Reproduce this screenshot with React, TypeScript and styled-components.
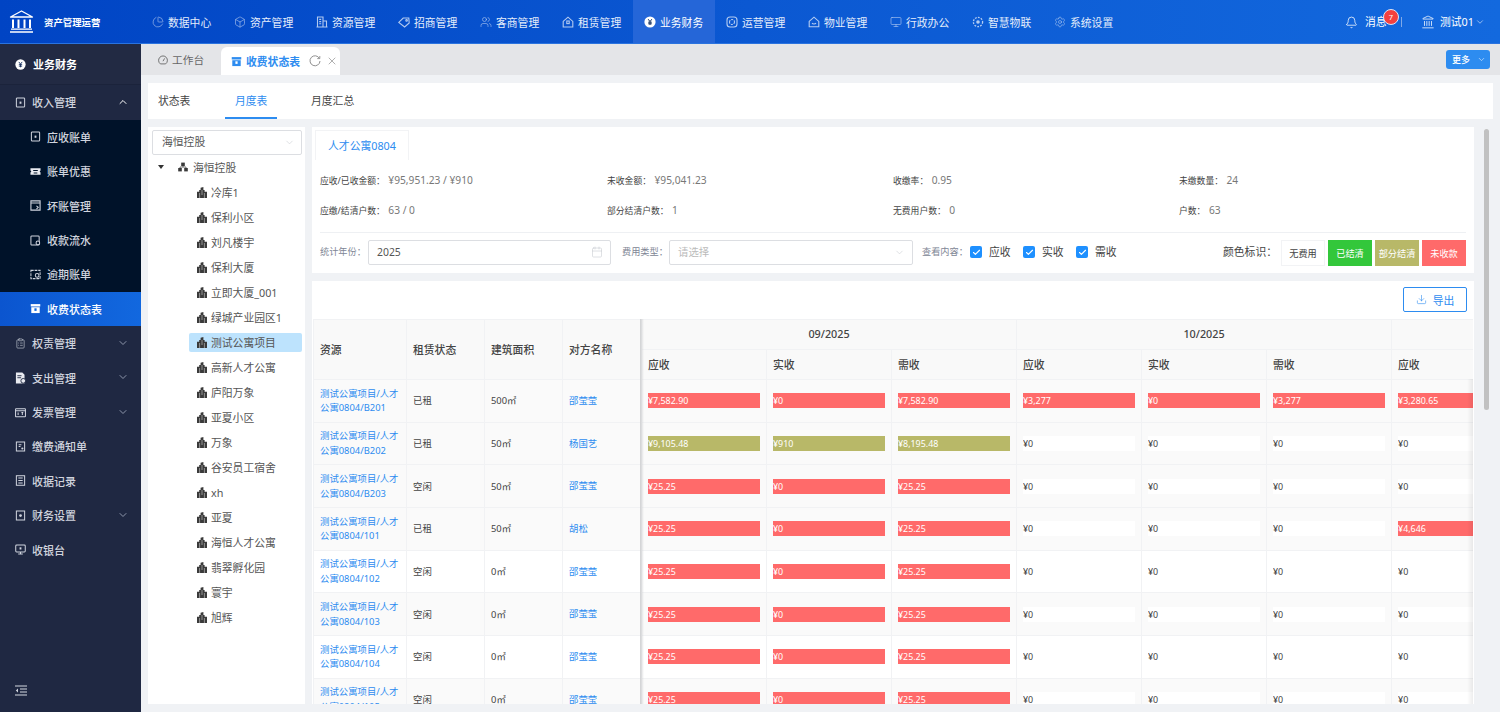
import React from "react";
import styled, { createGlobalStyle } from "styled-components";
import { Bell, Box, Calendar, ChevronDown, ChevronUp, Check, ClipboardList, Download, Landmark, Monitor, PieChart, Settings, Users, X } from "lucide-react";

const Global = createGlobalStyle`
  html, body { margin: 0; padding: 0; width: 100%; height: 100%; overflow: hidden; background: #f0f2f5; }
  body { font-family: "Noto Sans", "Noto Sans CJK SC", sans-serif; font-size: 11px; color: #333; }
  * { box-sizing: border-box; }
`;

const Page = styled.div`position: relative; width: 1500px; height: 712px; overflow: hidden; background: #f0f2f5;`;

const Header = styled.header`
  position: absolute; left: 0; top: 0; width: 1500px; height: 44px; display: flex; align-items: center;
  background: linear-gradient(90deg, #0044c4 0%, #0b58d2 50%, #1369de 100%);
  border-bottom: 1px solid #2a73df; color: #fff;
`;
const Brand = styled.div`width: 140.5px; display: flex; align-items: center; padding-left: 9px; height: 100%; flex: none;`;
const BrandName = styled.span`margin-left: 10px; font-size: 9.4px; font-weight: 700; white-space: nowrap;`;
const NavItem = styled.div<{ $active?: boolean }>`
  width: 82px; height: 100%; flex: none; display: flex; align-items: center; padding-left: 11.5px; gap: 4px;
  font-size: 10.8px; white-space: nowrap; color: ${(p) => (p.$active ? "#fff" : "#e4edfb")};
  background: ${(p) => (p.$active ? "#2566d8" : "transparent")};
  svg { flex: none; opacity: ${(p) => (p.$active ? 1 : 0.78)}; }
`;
const HeaderRight = styled.div`position: absolute; left: 0; top: 0; height: 44px; width: 100%; pointer-events: none;`;
const HeaderText = styled.span<{ $x: number }>`position: absolute; left: ${(p) => p.$x}px; top: 14px; line-height: 16px; font-size: 10.8px; white-space: nowrap;`;
const HeaderIcon = styled.span<{ $x: number }>`position: absolute; left: ${(p) => p.$x}px; top: 15px; height: 14px; display: flex; align-items: center;`;
const Badge = styled.span`
  position: absolute; left: 1383px; top: 9px; width: 16px; height: 16px; border-radius: 50%; background: #f4413f;
  border: 1px solid #dbe6f8; color: #fff; font-size: 7.5px; line-height: 14px; text-align: center;
`;
const HeaderDivider = styled.span`position: absolute; left: 1401px; top: 17px; width: 1px; height: 10px; background: #7fa9e8;`;

const Sidebar = styled.aside`position: absolute; left: 0; top: 44px; width: 141px; height: 668px; background: #1f2842;`;
const SideTitle = styled.div`
  height: 41.3px; display: flex; align-items: center; padding-left: 15px; gap: 7px; background: #222a43; color: #fff;
  font-size: 11px; font-weight: 700; border-bottom: 1px solid #1b233b;
`;
const SideRow = styled.div<{ $sub?: boolean; $active?: boolean }>`
  position: relative; height: 34.4px; display: flex; align-items: center; font-size: 11px; white-space: nowrap;
  padding-left: ${(p) => (p.$sub ? "30px" : "15px")}; gap: 6px;
  color: ${(p) => (p.$active ? "#fff" : "#d0d4de")}; font-weight: 500;
  background: ${(p) => (p.$active ? "linear-gradient(90deg,#0b55cf,#1268df)" : p.$sub ? "#001229" : "transparent")};
  svg.lead { flex: none; }
`;
const Arrow = styled.span`position: absolute; left: 117px; top: 11px; display: flex; color: #8d96aa;`;
const Collapse = styled.div`position: absolute; left: 15px; top: 641px; color: #d3d7e0; display: flex;`;

const TabBar = styled.div`position: absolute; left: 141px; top: 44px; width: 1359px; height: 31px; background: #e4e5e8;`;
const HomeTab = styled.div`position: absolute; left: 17px; top: 0; height: 31px; display: flex; align-items: center; gap: 4px; color: #666; font-size: 10.7px;`;
const ActiveTab = styled.div`
  position: absolute; left: 80px; top: 3px; width: 119px; height: 28px; background: #fff; border-radius: 6px 6px 0 0;
  display: flex; align-items: center; padding-left: 10px; color: #2d8cf0; font-size: 10.8px; font-weight: 600;
  span { margin-left: 4px; }
`;
const TabTool = styled.span<{ $x: number }>`position: absolute; left: ${(p) => p.$x}px; top: 8px; display: flex; color: #8f8f8f;`;
const MoreButton = styled.div`
  position: absolute; left: 1305px; top: 6px; width: 44px; height: 19px; border-radius: 3px; background: #2d8cf0; color: #fff;
  font-size: 9px; font-weight: 500; display: flex; align-items: center; padding-left: 6px; gap: 7px;
`;

const SubTabs = styled.div`position: absolute; left: 148px; top: 83px; width: 1345px; height: 36px; background: #fff;`;
const SubTab = styled.div<{ $x: number; $active?: boolean }>`
  position: absolute; left: ${(p) => p.$x}px; top: 0; height: 36px; line-height: 35px; font-size: 10.8px;
  color: ${(p) => (p.$active ? "#2d8cf0" : "#444")}; white-space: nowrap;
`;
const SubUnderline = styled.div`position: absolute; left: 77px; top: 34px; width: 52px; height: 2px; background: #2d8cf0;`;

const TreePanel = styled.div`position: absolute; left: 148px; top: 127px; width: 157px; height: 577px; background: #fff;`;
const TreeSelect = styled.div`
  position: absolute; left: 4px; top: 3px; width: 150px; height: 25px; border: 1px solid #dcdee2; border-radius: 2px; padding-left: 9px;
  line-height: 22px; font-size: 10.8px; color: #555;
`;
const SelectArrow = styled.span<{ $x: number; $y?: number }>`position: absolute; left: ${(p) => p.$x}px; top: ${(p) => p.$y ?? 6}px; display: flex; color: #c5c8ce;`;
const TreeRoot = styled.div`position: absolute; left: 0; top: 27.5px; width: 157px; height: 25px; display: flex; align-items: center; font-size: 10.8px; color: #555; gap: 5px;`;
const Caret = styled.span`margin-left: 10px; margin-right: 9px; width: 0; height: 0; border-left: 3px solid transparent; border-right: 3px solid transparent; border-top: 4px solid #333;`;
const TreeList = styled.div`position: absolute; left: 41px; top: 52.5px; width: 113px;`;
const TreeNode = styled.div<{ $active?: boolean }>`
  height: 25px; display: flex; align-items: center; padding-left: 8px; gap: 4px; font-size: 10.8px; color: #555; white-space: nowrap;
  position: relative; z-index: 0;
  &::before { content: ""; position: absolute; z-index: -1; left: 0; right: 0; top: 3px; bottom: 3px; border-radius: 2px; background: ${(p) => (p.$active ? "#bde3fd" : "transparent")}; }
`;

const InfoPanel = styled.div`position: absolute; left: 312px; top: 127px; width: 1162px; height: 146px; background: #fff;`;
const PanelTab = styled.div`
  position: absolute; left: 3px; top: 3px; width: 94px; height: 30px; border: 1px solid #f2f3f5; border-bottom: none;
  color: #2d8cf0; font-size: 10.8px; line-height: 30px; text-align: center;
`;
const Stat = styled.div<{ $x: number; $y: number }>`
  position: absolute; left: ${(p) => p.$x}px; top: ${(p) => p.$y}px; height: 16px; line-height: 16px; white-space: nowrap; font-size: 8.8px; color: #444;
  b { font-weight: 400; font-size: 10.2px; color: #777; margin-left: 3.5px; }
`;
const Divider = styled.div`position: absolute; left: 8px; right: 8px; top: 105px; height: 1px; background: #eef0f3;`;
const FilterLabel = styled.span<{ $x: number }>`position: absolute; left: ${(p) => p.$x}px; top: 117px; line-height: 16px; font-size: 9.2px; color: #808695; white-space: nowrap;`;
const Field = styled.div<{ $x: number; $w: number; $muted?: boolean }>`
  position: absolute; left: ${(p) => p.$x}px; top: 113px; width: ${(p) => p.$w}px; height: 25px; border: 1px solid #dcdee2; border-radius: 2px;
  padding-left: 8px; line-height: 23px; font-size: 10.4px; color: ${(p) => (p.$muted ? "#bbb" : "#555")};
`;
const CheckBox = styled.span<{ $x: number }>`
  position: absolute; left: ${(p) => p.$x}px; top: 119px; width: 12px; height: 12px; background: #1e90ff; border-radius: 2px; display: flex; align-items: center; justify-content: center; color: #fff;
`;
const CheckLabel = styled.span<{ $x: number }>`position: absolute; left: ${(p) => p.$x}px; top: 117px; line-height: 16px; font-size: 10.8px; color: #444; white-space: nowrap;`;
const LegendTitle = styled.span`position: absolute; left: 911px; top: 117px; line-height: 16px; font-size: 10.8px; color: #444; white-space: nowrap;`;
const Legend = styled.span<{ $x: number; $bg: string; $c: string }>`
  position: absolute; left: ${(p) => p.$x}px; top: 113px; width: 44px; height: 26px; background: ${(p) => p.$bg}; color: ${(p) => p.$c};
  font-size: 9.2px; line-height: 26px; text-align: center; border: 1px solid ${(p) => (p.$bg === "#fff" ? "#f2f3f5" : p.$bg)}; white-space: nowrap;
`;

const TablePanel = styled.div`position: absolute; left: 312px; top: 281px; width: 1162px; height: 423px; background: #fff; overflow: hidden;`;
const ExportButton = styled.div`
  position: absolute; left: 1091px; top: 6px; width: 64px; height: 25px; border: 1px solid #2d8cf0; border-radius: 2px; color: #2d8cf0; font-size: 10.8px;
  display: flex; align-items: center; justify-content: center; gap: 6px;
`;
const TableBox = styled.div`position: absolute; left: 1px; top: 38px; width: 1160px; height: 385px; overflow: hidden;`;
const Table = styled.table`border-collapse: collapse; table-layout: fixed; width: 1203px;`;
const Th = styled.th<{ $left?: boolean }>`
  background: #f9f9f9; border: 1px solid #f1f2f4; font-weight: 500; font-size: 10.8px; color: #444; padding: 0 6px 2px; text-align: ${(p) => (p.$left ? "left" : "center")};
  height: 30px; white-space: nowrap;
`;
const Td = styled.td<{ $plain?: boolean }>`
  background: ${(p) => (p.$plain ? "#fff" : "#fafafa")}; border: 1px solid #f1f2f4; font-size: 9.4px; color: #444; padding: 0 6px; height: 42.67px; line-height: 15px; white-space: nowrap;
`;
const Link = styled.span`color: #2d8cf0; white-space: normal; display: block; line-height: 14.6px; padding-top: 1px;`;
const Amount = styled.div<{ $kind: string }>`
  height: 15px; line-height: 15px; width: 112px; overflow: hidden; font-size: 8.9px;
  background: ${(p) => (p.$kind === "red" ? "#ff6a6a" : p.$kind === "olive" ? "#b8b868" : "#fff")};
  color: ${(p) => (p.$kind === "zero" ? "#444" : "#fff")};
`;
const FixedShadow = styled.div`position: absolute; left: 327px; top: 0; width: 4px; height: 385px; background: linear-gradient(90deg, #cfd0d2, rgba(230,230,230,0));`;
const RightShadow = styled.div`position: absolute; right: 0; top: 60px; width: 6px; height: 325px; background: linear-gradient(90deg, rgba(0,0,0,0), rgba(0,0,0,.07));`;

const Scrollbar = styled.div`position: absolute; left: 1484px; top: 129px; width: 5px; height: 281px; border-radius: 3px; background: #c1c1c1;`;

const Svg = ({ s = 11, vb = 12, fill = "none", children }: { s?: number; vb?: number; fill?: string; children: React.ReactNode }) => (
  <svg className="lead" width={s} height={s} viewBox={`0 0 ${vb} ${vb}`} fill={fill} stroke="currentColor" strokeWidth="1.1">{children}</svg>
);

function YenDot({ size }: { size: number }) {
  return (
    <svg className="lead" width={size} height={size} viewBox="0 0 12 12">
      <circle cx="6" cy="6" r="5.6" fill="#fff" />
      <path d="M4.2 3.2 6 5.6l1.8-2.4M4.2 6.2h3.6M4.2 7.8h3.6M6 5.6v3.4" stroke="#17305f" strokeWidth="1" fill="none" />
    </svg>
  );
}
const FrameDot = () => <Svg><rect x="1.5" y="1" width="9" height="10" rx="1" /><rect x="5" y="5" width="2" height="2.4" fill="currentColor" stroke="none" /></Svg>;
const TicketFill = () => (
  <svg className="lead" width="11" height="11" viewBox="0 0 12 12"><path d="M.5 2.5h11V5l-1 1 1 1v2.5H.5V7l1-1-1-1z" fill="#e8eaf0" /><path d="M3.5 5h5M4 7.6h4" stroke="#001229" strokeWidth="1.1" /></svg>
);
const FrameCut = () => <Svg><path d="M1 1h10v10H1z" strokeWidth="1.2" /><path d="M1 3.4h10M7 6.5l2 1.5-2 2" /></Svg>;
const FrameFlow = () => <Svg><rect x="1" y="1" width="9" height="10" rx="1" /><circle cx="8.6" cy="8.6" r="2" fill="#001229" /></Svg>;
const FrameLate = () => <Svg><path d="M1 1.5h10v9H1z" strokeDasharray="3 1" /><circle cx="7.8" cy="7" r="2" fill="#001229" /></Svg>;
const ArchiveFill = () => (
  <svg className="lead" width="11" height="11" viewBox="0 0 12 12" fill="currentColor"><path d="M.8 1.2h10.4v2.6H.8z" /><path d="M1.4 4.6h9.2v6.4H1.4z" /><rect x="4.8" y="5.8" width="2.4" height="2.8" fill="#1268df" /></svg>
);
const BillFill = () => (
  <svg className="lead" width="11" height="12" viewBox="0 0 12 13"><path d="M1 .6h7l2.4 2.4v9.4H1z" fill="#e8eaf0" /><circle cx="9" cy="9.6" r="2.6" fill="#e8eaf0" stroke="#1f2842" strokeWidth="1" /><path d="M2.6 4h4.5M2.6 6.2h4" stroke="#1f2842" strokeWidth="1" /></svg>
);
const InvoiceIcon = () => <Svg><rect x=".6" y="2" width="10.8" height="8.6" rx=".6" /><path d="M.6 4h10.8M3.4 6v2.6M7 6h2M8 6v2.6" /></Svg>;
const NoticeIcon = () => <Svg><path d="M1.5 1h9v10h-9z" /><path d="M4 4h3M4 6h2" /><circle cx="8" cy="8.2" r="1.2" fill="currentColor" stroke="none" /></Svg>;
const ReceiptIcon = () => <Svg><rect x="1.5" y=".8" width="9" height="10.4" /><path d="M3.6 3.4h4.8M3.6 6h4.8M3.6 8.6h4.8" /></Svg>;
const GearFrame = () => <Svg><path d="M1.5 1h9v10h-9z" /><circle cx="6" cy="6" r="1.5" fill="currentColor" stroke="none" /></Svg>;
const DeskIcon = () => <Svg><rect x=".8" y="1.2" width="10.4" height="7.4" rx="1" /><path d="M3.5 10.9h5M6 8.6v2.3" /><rect x="5" y="3.6" width="2" height="2.4" fill="currentColor" stroke="none" /></Svg>;

const NavBuilding = () => <Svg s={12}><path d="M1.5 11V1h5.5v10M7 5h3.5v6M.5 11h11M3.2 3.4h2M3.2 5.6h2M3.2 7.8h2" /></Svg>;
const NavTag = () => <Svg s={12}><path d="M.8 6.4 5.2 2h5.6l.4 5L6.6 11z" /><circle cx="8.6" cy="4.4" r=".8" /></Svg>;
const NavOps = () => <Svg s={12}><rect x="1" y="1" width="10" height="10" rx="3" /><path d="M3.5 6a2.5 2.5 0 0 1 5 0M8.5 6a2.5 2.5 0 0 1-5 0" strokeDasharray="2 1" /></Svg>;
const NavProperty = () => <Svg s={12}><path d="M1.2 5.4 6 1.2l4.8 4.2v5.4H1.2z" /><path d="M4 7.2c.8 1 3.2 1 4 0" /></Svg>;
const NavIot = () => <Svg s={12}><circle cx="6" cy="6" r="1.8" fill="currentColor" stroke="none" /><circle cx="6" cy="6" r="4.6" strokeDasharray="1.8 1.2" strokeWidth="1.3" /></Svg>;
const NavLease = () => <Svg s={12}><path d="M1.2 5.4 6 1.2l4.8 4.2v5.6H1.2z" /><rect x="4.8" y="5" width="2.4" height="2.6" /></Svg>;

function LogoMark() {
  return (
    <svg width="25" height="23" viewBox="0 0 25 23" fill="none" stroke="#fff" style={{ flex: "none" }}>
      <path d="M12.5 1 23.5 7H1.5z" strokeWidth="1.3" strokeLinejoin="round" />
      <path d="M4 9.5v8.5M9.5 9.5v8.5M15.5 9.5v8.5M21 9.5v8.5" strokeWidth="2" />
      <path d="M2 19.2h21M1 22h23" strokeWidth="1.3" />
    </svg>
  );
}

function Tower() {
  return (
    <svg width="10" height="11" viewBox="0 0 10 11" fill="#3a3a3a" style={{ flex: "none" }}>
      <path d="M0 11V4.8h2.2V3H3.6V.8L6.4 0v3h1.2v1.8H10V11z" />
      <path d="M2.6 11V6M7.4 11V6M5 8V3" stroke="#fff" strokeWidth=".45" />
    </svg>
  );
}

function OrgIcon() {
  return (
    <svg width="10" height="10" viewBox="0 0 10 10" fill="#3a3a3a" style={{ flex: "none" }}>
      <rect x="3.2" y=".6" width="3.6" height="3.4" /><rect x=".2" y="6" width="3.6" height="3.4" /><rect x="6.2" y="6" width="3.6" height="3.4" />
      <path d="M5 4v1.2M2 6V5h6v1" stroke="#3a3a3a" strokeWidth=".7" fill="none" />
    </svg>
  );
}

function ArchiveFillTab() {
  return (
    <svg width="11" height="11" viewBox="0 0 12 12" fill="#2d8cf0" style={{ flex: "none" }}>
      <path d="M.8 1.2h10.4v2.6H.8z" /><path d="M1.4 4.6h9.2v6.4H1.4z" /><rect x="4.8" y="5.8" width="2.4" height="2.8" fill="#fff" />
    </svg>
  );
}

const nav: [string, React.ReactNode, boolean?][] = [
  ["数据中心", <PieChart size={12} strokeWidth={1.2} />],
  ["资产管理", <Box size={12} strokeWidth={1.2} />],
  ["资源管理", <NavBuilding />],
  ["招商管理", <NavTag />],
  ["客商管理", <Users size={12} strokeWidth={1.2} />],
  ["租赁管理", <NavLease />],
  ["业务财务", <YenDot size={12} />, true],
  ["运营管理", <NavOps />],
  ["物业管理", <NavProperty />],
  ["行政办公", <Monitor size={12} strokeWidth={1.2} />],
  ["智慧物联", <NavIot />],
  ["系统设置", <Settings size={12} strokeWidth={1.1} />],
];

const subItems: [string, React.ReactNode, boolean?][] = [
  ["应收账单", <FrameDot />],
  ["账单优惠", <TicketFill />],
  ["坏账管理", <FrameCut />],
  ["收款流水", <FrameFlow />],
  ["逾期账单", <FrameLate />],
  ["收费状态表", <ArchiveFill />, true],
];

const topItems: [string, React.ReactNode, boolean][] = [
  ["权责管理", <ClipboardList className="lead" size={11} strokeWidth={1.3} />, true],
  ["支出管理", <BillFill />, true],
  ["发票管理", <InvoiceIcon />, true],
  ["缴费通知单", <NoticeIcon />, false],
  ["收据记录", <ReceiptIcon />, false],
  ["财务设置", <GearFrame />, true],
  ["收银台", <DeskIcon />, false],
];

const treeItems = ["冷库1", "保利小区", "刘凡楼宇", "保利大厦", "立即大厦_001", "绿城产业园区1", "测试公寓项目", "高新人才公寓", "庐阳万象", "亚夏小区", "万象", "谷安员工宿舍", "xh", "亚夏", "海恒人才公寓", "翡翠孵化园", "寰宇", "旭辉"];

type Row = { res: string; st: string; area: string; name: string; kind: string; plain?: boolean; a: string[] };
const base = "测试公寓项目/人才公寓0804/";
const z = (a: string, b: string, c: string, last = "¥0") => [a, b, c, "¥0", "¥0", "¥0", last];
const rows: Row[] = [
  { res: "B201", st: "已租", area: "500", name: "邵莹莹", kind: "red", a: ["¥7,582.90", "¥0", "¥7,582.90", "¥3,277", "¥0", "¥3,277", "¥3,280.65"] },
  { res: "B202", st: "已租", area: "50", name: "杨国艺", kind: "olive", a: z("¥9,105.48", "¥910", "¥8,195.48") },
  { res: "B203", st: "空闲", area: "50", name: "邵莹莹", kind: "red", a: z("¥25.25", "¥0", "¥25.25") },
  { res: "101", st: "已租", area: "50", name: "胡松", kind: "red", a: z("¥25.25", "¥0", "¥25.25", "¥4,646") },
  { res: "102", st: "空闲", area: "0", name: "邵莹莹", kind: "red", plain: true, a: z("¥25.25", "¥0", "¥25.25") },
  { res: "103", st: "空闲", area: "0", name: "邵莹莹", kind: "red", a: z("¥25.25", "¥0", "¥25.25") },
  { res: "104", st: "空闲", area: "0", name: "邵莹莹", kind: "red", plain: true, a: z("¥25.25", "¥0", "¥25.25") },
  { res: "105", st: "空闲", area: "0", name: "邵莹莹", kind: "red", a: z("¥25.25", "¥0", "¥25.25") },
];

const kindOf = (r: Row, i: number, v: string) => {
  if (i < 3) return r.kind;
  return r.res === "B201" || v !== "¥0" ? "red" : "zero";
};

const colWidths = [93, 78, 78, 79, 125, 125, 125, 125, 125, 125, 125];
const sub = ["应收", "实收", "需收", "应收", "实收", "需收", "应收"];

export default function App() {
  return (
    <Page>
      <Global />
      <Header>
        <Brand>
          <LogoMark />
          <BrandName>资产管理运营</BrandName>
        </Brand>
        {nav.map(([t, i, a]) => (
          <NavItem key={t} $active={a}>{i}<span>{t}</span></NavItem>
        ))}
        <HeaderRight>
          <HeaderIcon $x={1345}><Bell size={13} strokeWidth={1.4} /></HeaderIcon>
          <HeaderText $x={1365}>消息</HeaderText>
          <Badge>7</Badge>
          <HeaderDivider />
          <HeaderIcon $x={1421}><Landmark size={14} strokeWidth={1.3} /></HeaderIcon>
          <HeaderText $x={1440}>测试01</HeaderText>
          <HeaderIcon $x={1475}><ChevronDown size={10} strokeWidth={1.3} /></HeaderIcon>
        </HeaderRight>
      </Header>

      <Sidebar>
        <SideTitle><YenDot size={11} />业务财务</SideTitle>
        <SideRow><FrameDot />收入管理<Arrow><ChevronUp size={12} strokeWidth={2} color="#fff" /></Arrow></SideRow>
        {subItems.map(([t, i, a]) => <SideRow key={t} $sub $active={a}>{i}{t}</SideRow>)}
        {topItems.map(([t, i, ar]) => (
          <SideRow key={t}>{i}{t}{ar && <Arrow><ChevronDown size={12} strokeWidth={2} /></Arrow>}</SideRow>
        ))}
        <Collapse>
          <svg width="12" height="11" viewBox="0 0 12 11" fill="none" stroke="currentColor" strokeWidth="1.2">
            <path d="M0 1h12M5 4h7M5 7h7M0 10h12" /><path d="M3 3.5 .8 5.5 3 7.5z" fill="currentColor" stroke="none" />
          </svg>
        </Collapse>
      </Sidebar>

      <TabBar>
        <HomeTab>
          <svg width="10" height="10" viewBox="0 0 10 10" fill="none" stroke="currentColor" strokeWidth=".9">
            <path d="M2.4 8.9a4.4 4.4 0 1 1 5.2 0z" /><path d="M5 6.2 6.6 3.4" />
          </svg>
          工作台
        </HomeTab>
        <ActiveTab>
          <ArchiveFillTab />
          <span>收费状态表</span>
          <TabTool $x={84}>
            <svg width="12" height="12" viewBox="0 0 12 12" fill="none" stroke="currentColor" strokeWidth="1"><path d="M10.4 3.4A5 5 0 1 0 11 6" /><path d="M10.8 1v2.6H8.2" strokeWidth=".9" /></svg>
          </TabTool>
          <TabTool $x={101}><X size={12} strokeWidth={1.4} /></TabTool>
        </ActiveTab>
        <MoreButton>更多<ChevronDown size={9} strokeWidth={1.4} /></MoreButton>
      </TabBar>

      <SubTabs>
        <SubTab $x={10}>状态表</SubTab>
        <SubTab $x={87} $active>月度表</SubTab>
        <SubUnderline />
        <SubTab $x={163}>月度汇总</SubTab>
      </SubTabs>

      <TreePanel>
        <TreeSelect>海恒控股<SelectArrow $x={131}><ChevronDown size={11} strokeWidth={1.2} /></SelectArrow></TreeSelect>
        <TreeRoot><Caret /><OrgIcon />海恒控股</TreeRoot>
        <TreeList>
          {treeItems.map((t) => (
            <TreeNode key={t} $active={t === "测试公寓项目"}><Tower />{t}</TreeNode>
          ))}
        </TreeList>
      </TreePanel>

      <InfoPanel>
        <PanelTab>人才公寓0804</PanelTab>
        <Stat $x={8} $y={45}>应收/已收金额：<b>¥95,951.23 / ¥910</b></Stat>
        <Stat $x={295} $y={45}>未收金额：<b>¥95,041.23</b></Stat>
        <Stat $x={581} $y={45}>收缴率：<b>0.95</b></Stat>
        <Stat $x={867} $y={45}>未缴数量：<b>24</b></Stat>
        <Stat $x={8} $y={75}>应缴/结清户数：<b>63 / 0</b></Stat>
        <Stat $x={295} $y={75}>部分结清户数：<b>1</b></Stat>
        <Stat $x={581} $y={75}>无费用户数：<b>0</b></Stat>
        <Stat $x={867} $y={75}>户数：<b>63</b></Stat>
        <Divider />
        <FilterLabel $x={8}>统计年份：</FilterLabel>
        <Field $x={56} $w={243}>2025<SelectArrow $x={222} $y={5}><Calendar size={12} strokeWidth={1.1} /></SelectArrow></Field>
        <FilterLabel $x={310}>费用类型：</FilterLabel>
        <Field $x={357} $w={244} $muted>请选择<SelectArrow $x={224} $y={6}><ChevronDown size={11} strokeWidth={1.2} /></SelectArrow></Field>
        <FilterLabel $x={610}>查看内容：</FilterLabel>
        <CheckBox $x={658}><Check size={9} strokeWidth={3} /></CheckBox>
        <CheckLabel $x={677}>应收</CheckLabel>
        <CheckBox $x={711}><Check size={9} strokeWidth={3} /></CheckBox>
        <CheckLabel $x={730}>实收</CheckLabel>
        <CheckBox $x={764}><Check size={9} strokeWidth={3} /></CheckBox>
        <CheckLabel $x={783}>需收</CheckLabel>
        <LegendTitle>颜色标识：</LegendTitle>
        <Legend $x={969} $bg="#fff" $c="#444">无费用</Legend>
        <Legend $x={1016} $bg="#33c73b" $c="#fff">已结清</Legend>
        <Legend $x={1063} $bg="#b8b868" $c="#fff">部分结清</Legend>
        <Legend $x={1110} $bg="#ff6a6a" $c="#fff">未收款</Legend>
      </InfoPanel>

      <TablePanel>
        <ExportButton><Download size={11} strokeWidth={1.3} />导出</ExportButton>
        <TableBox>
          <Table>
            <colgroup>{colWidths.map((w, i) => <col key={i} style={{ width: w }} />)}</colgroup>
            <thead>
              <tr>
                <Th $left rowSpan={2}>资源</Th>
                <Th $left rowSpan={2}>租赁状态</Th>
                <Th $left rowSpan={2}>建筑面积</Th>
                <Th $left rowSpan={2}>对方名称</Th>
                <Th colSpan={3}>09/2025</Th>
                <Th colSpan={3}>10/2025</Th>
                <Th />
              </tr>
              <tr>{sub.map((s, i) => <Th key={i} $left>{s}</Th>)}</tr>
            </thead>
            <tbody>
              {rows.map((r) => (
                <tr key={r.res}>
                  <Td $plain={r.plain}><Link>{base + r.res}</Link></Td>
                  <Td $plain={r.plain}>{r.st}</Td>
                  <Td $plain={r.plain}>{r.area}㎡</Td>
                  <Td $plain={r.plain}><Link>{r.name}</Link></Td>
                  {r.a.map((v, i) => (
                    <Td key={i} $plain={r.plain}><Amount $kind={kindOf(r, i, v)}>{v}</Amount></Td>
                  ))}
                </tr>
              ))}
            </tbody>
          </Table>
          <FixedShadow />
          <RightShadow />
        </TableBox>
      </TablePanel>

      <Scrollbar />
    </Page>
  );
}
